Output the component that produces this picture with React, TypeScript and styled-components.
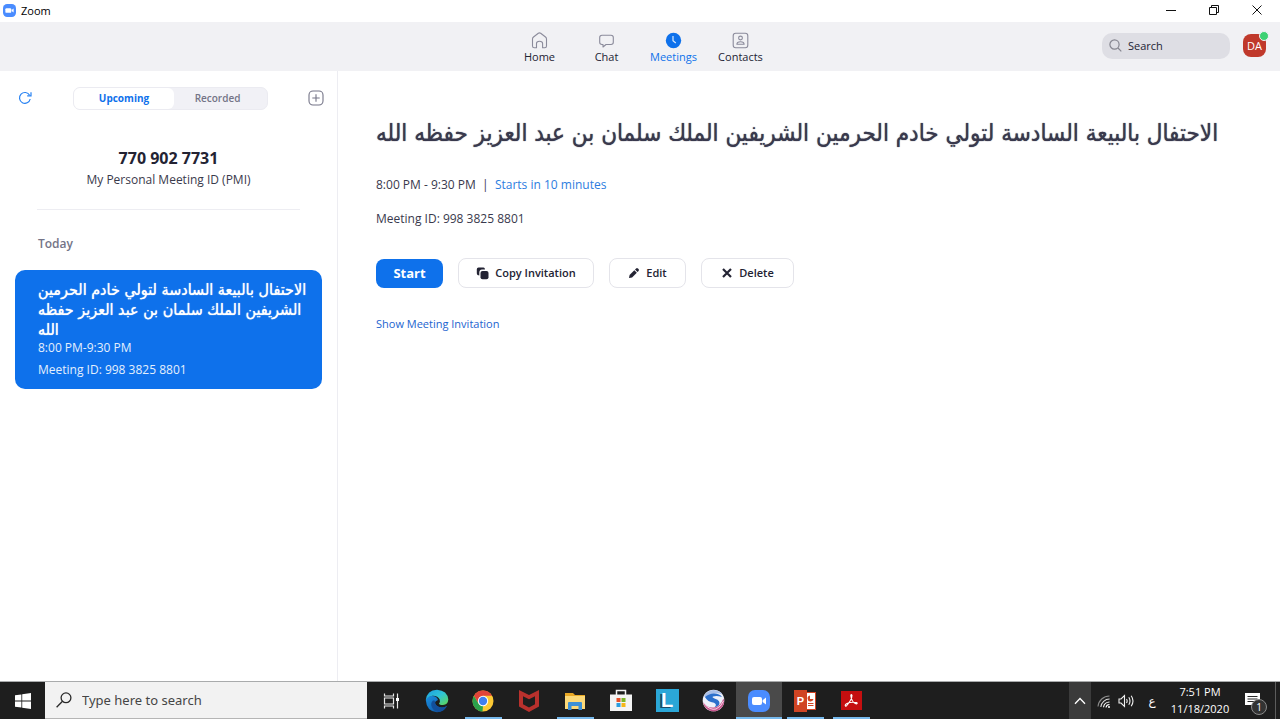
import React, { useState } from "react";
import styled, { createGlobalStyle } from "styled-components";

const GlobalStyle = createGlobalStyle`
  * { box-sizing: border-box; }
  body {
    margin: 0;
    background: #ffffff;
    color: #232333;
    font-family: "Open Sans", "DejaVu Sans", sans-serif;
    font-size: 12px;
    line-height: 16px;
  }
  button, input { font: inherit; color: inherit; }
  button { background: none; border: 0; padding: 0; margin: 0; cursor: pointer; }
  h1, h2, p, ul { margin: 0; padding: 0; font-weight: normal; }
  a { text-decoration: none; }
  svg { display: block; flex: none; }
`;

const Screen = styled.div`
  min-height: 100vh;
  display: flex;
  flex-direction: column;
`;

/* ---------- window title bar ---------- */

const TitleBar = styled.div`
  height: 22px;
  display: flex;
  align-items: flex-start;
  justify-content: space-between;
  padding: 0 2px 0 3px;
`;

const AppName = styled.span`
  display: flex;
  align-items: center;
  gap: 5px;
  font-size: 11px;
  line-height: 21px;
  color: #000;
`;

const WindowButtons = styled.div`
  display: flex;
`;

const WindowButton = styled.button`
  width: 43px;
  height: 20px;
  display: grid;
  place-items: center;
`;

/* ---------- header ---------- */

const Header = styled.header`
  height: 49px;
  background: #f1f1f4;
  display: grid;
  grid-template-columns: 1fr auto 1fr;
  align-items: center;
`;

const Nav = styled.nav`
  grid-column: 2;
  display: grid;
  grid-template-columns: repeat(4, 67px);
  padding-top: 4px;
`;

const NavItem = styled.button<{ $active?: boolean }>`
  display: flex;
  flex-direction: column;
  align-items: center;
  font-size: 11px;
  line-height: 16px;
  color: ${(p) => (p.$active ? "#0e71eb" : "#232333")};
`;

const HeaderRight = styled.div`
  justify-self: end;
  display: flex;
  align-items: center;
  gap: 13px;
  padding: 0 14px 2px 0;
`;

const SearchBox = styled.label`
  width: 128px;
  height: 26px;
  border-radius: 10px;
  background: #dedee4;
  display: flex;
  align-items: center;
  gap: 6px;
  padding: 0 7px;

  input {
    width: 80px;
    border: 0;
    padding: 0;
    background: none;
    outline: none;
    font-size: 11px;
  }
  input::placeholder { color: #232333; opacity: 1; }
`;

const Avatar = styled.button`
  position: relative;
  width: 23px;
  height: 23px;
  border-radius: 8px;
  background: #c0392b;
  color: #fff;
  font-size: 11px;
  line-height: 23px;
  text-align: center;
`;

const Presence = styled.span`
  position: absolute;
  top: -3px;
  right: -3px;
  width: 10px;
  height: 10px;
  border-radius: 50%;
  border: 1px solid #f1f1f4;
  background: #3dd173;
`;

/* ---------- body ---------- */

const Body = styled.div`
  flex: 1;
  display: flex;
`;

const Sidebar = styled.aside`
  width: 338px;
  flex: none;
  border-right: 1px solid #ededf2;
  padding: 15px 13px 0;
`;

const SidebarTop = styled.div`
  display: flex;
  align-items: center;
  justify-content: space-between;
  height: 24px;
  padding-left: 4px;
`;

const IconButton = styled.button`
  width: 16px;
  height: 16px;
  display: grid;
  place-items: center;
`;

const Segmented = styled.div`
  width: 195px;
  height: 23px;
  display: flex;
  border-radius: 7px;
  background: #f1f1f6;
  border: 1px solid #ebebf1;
`;

const Segment = styled.button<{ $active?: boolean }>`
  width: ${(p) => (p.$active ? "100px" : "87px")};
  height: 21px;
  border-radius: 6px;
  background: ${(p) => (p.$active ? "#fff" : "transparent")};
  color: ${(p) => (p.$active ? "#0e71eb" : "#747487")};
  font-size: 10px;
  font-weight: ${(p) => (p.$active ? 700 : 600)};
  line-height: 20px;
`;

const PersonalId = styled.section`
  margin: 37px 24px 0;
  padding-bottom: 19px;
  border-bottom: 1px solid #ededf2;
  text-align: center;

  h2 { font-size: 16px; line-height: 22px; font-weight: 700; }
  p { line-height: 21px; font-size: 12px; color: #3a3a4c; }
`;

const DayLabel = styled.h2`
  margin: 24px 25px 0;
  font-size: 12px;
  line-height: 20px;
  font-weight: 600;
  color: #747487;
`;

const MeetingCard = styled.button`
  display: block;
  width: 307px;
  margin: 16px 2px 0;
  padding: 10px 12px 11px 23px;
  border-radius: 10px;
  background: #0e71eb;
  color: #fff;
  text-align: left;
`;

const CardTitle = styled.span`
  display: block;
  font-family: "DejaVu Sans Condensed", "DejaVu Sans", sans-serif;
  font-size: 16px;
  line-height: 20px;
  text-align: left;
  text-shadow: 0 0 1px #fff;
`;

const CardLine = styled.span`
  display: block;
  font-size: 12px;
  line-height: 16px;
  color: #e3effd;

  & + & { margin-top: 6px; }
`;

const Detail = styled.main`
  flex: 1;
  padding: 44px 38px 0;
`;

const DetailTitle = styled.h1`
  font-family: "DejaVu Sans Condensed", "DejaVu Sans", sans-serif;
  font-size: 24px;
  line-height: 36px;
  color: #39394d;
  text-align: left;
  text-shadow: 0 0 1px #39394d;
`;

const DetailLine = styled.p`
  margin-top: 14px;
  line-height: 20px;
  color: #39394d;
  white-space: pre;

  &:first-of-type { margin-top: 24px; }
`;

const StartsIn = styled.span`
  color: #2d7de0;
`;

const Actions = styled.div`
  display: flex;
  align-items: center;
  gap: 15px;
  margin: 29px 0 28px;
`;

const Action = styled.button<{ $width: number }>`
  width: ${(p) => p.$width}px;
  height: 30px;
  border: 1px solid #e4e4ea;
  border-radius: 8px;
  display: flex;
  align-items: center;
  justify-content: center;
  gap: 6px;
  font-size: 11px;
  font-weight: 600;
`;

const StartButton = styled(Action)`
  border: 0;
  height: 29px;
  background: #0e71eb;
  color: #fff;
  font-size: 13px;
  font-weight: 700;
`;

const TextLink = styled.a`
  font-size: 11px;
  line-height: 16px;
  color: #1c64cf;
`;

/* ---------- taskbar ---------- */

const Taskbar = styled.footer`
  height: 38px;
  background: #1e1e1e;
  border-top: 1px solid #a9abac;
  display: flex;
  color: #fff;
`;

const StartMenu = styled.button`
  width: 45px;
  display: grid;
  place-items: center;
`;

const TaskSearch = styled.label`
  width: 322px;
  background: #f2f2f2;
  border-bottom: 1px solid #b5b5b5;
  color: #3c3c3c;
  display: flex;
  align-items: center;
  gap: 10px;
  padding-left: 11px;

  input {
    width: 240px;
    border: 0;
    padding: 0;
    outline: none;
    background: none;
    font-family: "Noto Sans", sans-serif;
    font-size: 13px;
    line-height: 20px;
  }
  input::placeholder { color: #454545; opacity: 1; }
`;

const TaskButton = styled.button<{ $state?: "running" | "active" }>`
  width: 46px;
  display: grid;
  place-items: center;
  position: relative;
  background: ${(p) => (p.$state === "active" ? "#4a4a4a" : "transparent")};

  &::after {
    content: "";
    position: absolute;
    left: ${(p) => (p.$state === "active" ? "0" : "5px")};
    right: ${(p) => (p.$state === "active" ? "0" : "4px")};
    bottom: 0;
    height: ${(p) => (p.$state ? "2px" : "0")};
    background: #76b9ed;
  }
`;

const TaskList = styled.div`
  display: flex;
  padding-left: 1px;
`;

const Tray = styled.div`
  margin-left: auto;
  display: flex;
  align-items: stretch;
`;

const TrayButton = styled.button<{ $width: number; $lit?: boolean }>`
  width: ${(p) => p.$width}px;
  display: grid;
  place-items: center;
  background: ${(p) => (p.$lit ? "#3b3b3b" : "transparent")};
  font-family: "DejaVu Sans", sans-serif;
  font-size: 12px;
`;

const Clock = styled.button`
  width: 62px;
  display: flex;
  flex-direction: column;
  align-items: center;
  justify-content: center;
  padding-bottom: 2px;
  font-size: 11px;
  line-height: 17px;
`;

const ShowDesktop = styled.button`
  width: 5px;
  border-left: 1px solid #5c5c5c;
`;

/* ---------- drawings ---------- */

const ZoomLogo = ({ size }: { size: number }) => (
  <svg width={size} height={size} viewBox="0 0 22 22">
    <rect width="22" height="22" rx="7" fill="#4a8cff" />
    <rect x="4" y="7" width="10" height="8" rx="2" fill="#fff" />
    <path d="M14.600 10.200 L18 7.600 V14.400 L14.600 11.900 Z" fill="#fff" />
  </svg>
);

const navStroke = { fill: "none", stroke: "#8b8b9b", strokeWidth: 1.1, strokeLinejoin: "round" as const };

const HomeIcon = () => (
  <svg width="17" height="17" viewBox="0 0 17 17" {...navStroke}>
    <path d="M1.500 7 Q1.500 5.800 2.500 5 L7.300 1.300 Q8.500 .5 9.700 1.300 L14.500 5 Q15.500 5.800 15.500 7 V14 Q15.500 15.800 13.800 15.800 H11.600 V11.500 Q11.600 9.300 8.500 9.300 Q5.500 9.300 5.500 11.500 V15.800 H3.300 Q1.500 15.800 1.500 14 Z" />
  </svg>
);

const ChatIcon = () => (
  <svg width="17" height="17" viewBox="0 0 17 17" {...navStroke}>
    <path d="M4 3.300 H13 Q15.300 3.300 15.300 5.500 V10.300 Q15.300 12.500 13 12.500 H8 L5 15 V12.500 H4 Q1.700 12.500 1.700 10.300 V5.500 Q1.700 3.300 4 3.300 Z" />
  </svg>
);

const MeetingsIcon = () => (
  <svg width="17" height="17" viewBox="0 0 17 17">
    <circle cx="8.500" cy="8.500" r="7.700" fill="#0e71eb" />
    <path d="M8 4 V8.700 L10.800 11" fill="none" stroke="#d8e9fd" strokeWidth="1.200" />
  </svg>
);

const ContactsIcon = () => (
  <svg width="17" height="17" viewBox="0 0 17 17" {...navStroke}>
    <rect x="1.200" y="1.200" width="14.600" height="14.600" rx="2.500" />
    <circle cx="8.500" cy="6" r="1.900" />
    <path d="M4.900 12.300 Q4.900 9.700 8.500 9.700 Q12.100 9.700 12.100 12.300 Z" />
  </svg>
);

const SearchIcon = () => (
  <svg width="13" height="13" viewBox="0 0 13 13" fill="none" stroke="#85858f" strokeWidth="1.200">
    <circle cx="5.500" cy="5.500" r="4.600" />
    <path d="M9 9 L12.300 12.300" />
  </svg>
);

const RefreshIcon = () => (
  <svg width="14" height="14" viewBox="0 0 14 14" fill="none" stroke="#2681f2" strokeWidth="1.200">
    <path d="M12.200 8 A5.400 5.400 0 1 1 11.600 4.200" />
    <path d="M13 1.200 V4.800 H9.200" />
  </svg>
);

const PlusIcon = () => (
  <svg width="16" height="16" viewBox="0 0 16 16" fill="none" stroke="#747487" strokeWidth="1.100">
    <rect x="1" y="1" width="14" height="14" rx="4" />
    <path d="M8 4.300 V11.700 M4.300 8 H11.700" />
  </svg>
);

const CopyIcon = () => (
  <svg width="13" height="13" viewBox="0 0 13 13" fill="#232333">
    <path d="M2.500 .5 H7.500 Q8.900 .5 9 2.600 H6 Q3.400 2.800 3.300 5.500 V8.500 Q.8 8.500 .8 6.500 V2.200 Q.8 .5 2.500 .5 Z" />
    <rect x="4.500" y="4" width="8" height="8.200" rx="2" />
  </svg>
);

const EditIcon = () => (
  <svg width="12" height="12" viewBox="0 0 12 12" fill="#232333">
    <path d="M1 11 L1.600 7.900 L6.300 3.200 L8.800 5.700 L4.100 10.400 Z" />
    <path d="M7 2.500 L8.100 1.400 Q9 .7 9.900 1.400 L10.600 2.100 Q11.300 3 10.600 3.900 L9.500 5 Z" />
  </svg>
);

const DeleteIcon = () => (
  <svg width="12" height="12" viewBox="0 0 12 12" fill="none" stroke="#232333" strokeWidth="2.200">
    <path d="M2 2 L10 10 M10 2 L2 10" />
  </svg>
);

const WindowsIcon = () => (
  <svg width="16" height="16" viewBox="0 0 16 16" fill="#fff">
    <path d="M0 2.300 L6.400 1.400 V7.500 H0 Z M7.200 1.300 L16 0 V7.500 H7.200 Z M0 8.400 H6.400 V14.600 L0 13.700 Z M7.200 8.400 H16 V16 L7.200 14.700 Z" />
  </svg>
);

const TaskSearchIcon = () => (
  <svg width="16" height="16" viewBox="0 0 16 16" fill="none" stroke="#2a2a2a" strokeWidth="1.300">
    <circle cx="10" cy="5.800" r="4.900" />
    <path d="M6.500 9.300 L.6 15.300" />
  </svg>
);

const TaskViewIcon = () => (
  <svg width="17" height="16" viewBox="0 0 17 16" fill="none" stroke="#e8e8e8" strokeWidth="1.200">
    <path d="M1.500 .5 V3 H10.500 V.5 M1.500 15.500 V13 H10.500 V15.500 M1.500 5 H10.500 V11 H1.500 Z M14.500 .5 V15.500" />
    <path d="M13 5 H16 V8 H13 Z" fill="#fff" stroke="none" />
  </svg>
);

const EdgeIcon = () => (
  <svg width="24" height="24" viewBox="0 0 24 24">
    <defs>
      <linearGradient id="edgeTop" x1="0" y1="0" x2="1" y2="1">
        <stop offset="0" stopColor="#1b9de2" />
        <stop offset=".5" stopColor="#2fc4d6" />
        <stop offset="1" stopColor="#62d84e" />
      </linearGradient>
      <linearGradient id="edgeBase" x1="0" y1="0" x2="1" y2="1">
        <stop offset="0" stopColor="#1a8fe0" />
        <stop offset="1" stopColor="#0d4f9e" />
      </linearGradient>
    </defs>
    <path d="M.8 11 Q1.500 7 7 7 Q12 7.200 13 11 Q10 12 10 14 Q11 18 16 18.500 Q19.500 18.700 22 17 Q18.500 23 12 23.300 Q1.500 22.500 .8 11 Z" fill="url(#edgeBase)" />
    <path d="M.8 11 Q2 1 12 .7 Q22.500 1.500 23.300 10.500 Q23 15.500 18 16 Q14.500 16 14 14.500 Q15.500 13 14.700 10.500 Q13 6.500 7.500 6.700 Q3 7 .8 11 Z" fill="url(#edgeTop)" />
    <path d="M8 11.500 Q5 14 7 18.500 Q9.500 23 14 23 Q19 22.300 22 17 Q18 19.200 14.500 18 Q9.500 16 10 12.500 Q10 11 8 11.500 Z" fill="#124f9b" />
  </svg>
);

const ChromeIcon = () => (
  <svg width="22" height="22" viewBox="0 0 22 22">
    <circle cx="11" cy="11" r="10.500" fill="#fcc934" />
    <path d="M1.900 5.750 A10.500 10.500 0 0 1 20.100 5.750 H11 L6.500 13.600 Z" fill="#e0443a" />
    <path d="M1.900 5.750 L6.450 13.600 L11 16.200 L10.500 21.500 A10.500 10.500 0 0 1 1.900 5.750 Z" fill="#2ba24c" />
    <circle cx="11" cy="11" r="5.200" fill="#fff" />
    <circle cx="11" cy="11" r="4.200" fill="#3f7ff0" />
  </svg>
);

const McAfeeIcon = () => (
  <svg width="22" height="24" viewBox="0 0 22 24">
    <path d="M1 1 L11 6 L21 1 V17.500 L11 23 L1 17.500 Z M5 7.200 V15.300 L11 18.500 L17 15.300 V7.200 L11 10.200 Z" fill="#b9312d" fillRule="evenodd" />
  </svg>
);

const ExplorerIcon = () => (
  <svg width="22" height="18" viewBox="0 0 22 18">
    <path d="M1 1 H9 L11 3 H21 V16 H1 Z" fill="#e9a825" />
    <rect x="1" y="4" width="20" height="13" fill="#fcd978" />
    <path d="M4 18 V11 Q4 10 5 10 H17 Q18 10 18 11 V18 H14.500 V14 H7.500 V18 Z" fill="#3b8fd6" />
  </svg>
);

const StoreIcon = () => (
  <svg width="22" height="23" viewBox="0 0 22 23">
    <path d="M6.500 6 V1.500 H15.500 V6" fill="none" stroke="#f4f4f4" strokeWidth="1.500" />
    <path d="M0 5.500 H22 V22 H0 Z" fill="#f4f4f4" />
    <rect x="6.500" y="9" width="4" height="4" fill="#e8502a" />
    <rect x="11.500" y="9" width="4" height="4" fill="#7cb628" />
    <rect x="6.500" y="14" width="4" height="4" fill="#2a9ee0" />
    <rect x="11.500" y="14" width="4" height="4" fill="#f6b718" />
  </svg>
);

const LetterTile = styled.span`
  width: 23px;
  height: 23px;
  background: #2ba7d8;
  font-family: "Liberation Sans", sans-serif;
  font-size: 20px;
  font-weight: 700;
  line-height: 23px;
  text-align: center;
  text-shadow: -2px 1px 0 #174a68;
`;

const SwirlIcon = () => (
  <svg width="23" height="23" viewBox="0 0 23 23">
    <circle cx="11.500" cy="11.500" r="10.800" fill="#eef1fa" />
    <path d="M2 7 Q5 1.500 11.500 1 Q18.500 1.500 20.500 5.500 Q14 2.800 9.500 6 Q6.500 9 11 11 Q6 12 2 7 Z" fill="#a9bfe8" />
    <path d="M3 8 Q7 4.500 12 4.500 Q18 4.800 20 8 Q15 6.500 11 7.500 Q9.500 8.500 13 9.700 Q19 11.500 17 16 Q15.500 18 12.500 18.200 Q15.500 15.500 12 13.700 Q5.500 13 3 8 Z" fill="#2c70cc" />
    <path d="M1 13 Q4.500 18.500 10.500 18.500 Q17.500 19.500 21.500 9.500 Q23.500 16 17.500 20.500 Q11 24.500 5 20 Q1.500 17 1 13 Z" fill="#c8558c" />
    <path d="M2.500 15 Q8 21.500 14 20 Q19 18 21.500 12" fill="none" stroke="#f6d6e6" strokeWidth="1" />
  </svg>
);

const OfficeGlyph = styled.span`
  display: flex;
  align-items: center;
  width: 22px;
  height: 22px;

  b {
    width: 13px;
    height: 22px;
    background: #d04423;
    font-family: "Liberation Sans", sans-serif;
    font-size: 11px;
    line-height: 22px;
    text-align: center;
  }
`;

const SlideIcon = () => (
  <svg width="9" height="18" viewBox="0 0 9 18">
    <rect width="9" height="18" fill="#d04423" />
    <rect y="1" width="8" height="16" fill="#fff" />
    <path d="M3 3.500 A3 3 0 1 0 6.500 7 H3 Z" fill="#d04423" />
    <path d="M1 11.500 H6.500 M1 13.500 H6.500" stroke="#d04423" />
  </svg>
);

const PdfIcon = () => (
  <svg width="21" height="19" viewBox="0 0 21 19">
    <rect width="21" height="19" fill="#c50f10" />
    <path d="M4.500 15 Q3.500 14 6 12.600 Q10 10.500 15.500 11.600 Q17 12.300 15.300 13 Q10.500 11.500 9.800 4.500 Q10 2.500 11 4.300 Q11 8.500 5.800 14.500 Q5 15.500 4.500 15 Z" fill="none" stroke="#fff" strokeWidth="1.100" />
  </svg>
);

const ChevronIcon = () => (
  <svg width="12" height="8" viewBox="0 0 12 8" fill="none" stroke="#fff" strokeWidth="1.300">
    <path d="M1 6.800 L6 1.500 L11 6.800" />
  </svg>
);

const WifiIcon = () => (
  <svg width="14" height="14" viewBox="0 0 14 14" fill="none" strokeWidth="1.100">
    <path d="M1 12.500 A11.500 11.500 0 0 1 12.500 2" stroke="#8c8c8c" />
    <path d="M3.800 13 A8.800 8.800 0 0 1 12.600 5" stroke="#dcdcdc" />
    <path d="M6.500 13.200 A6 6 0 0 1 12.500 8" stroke="#fff" />
    <path d="M9 13.500 A3.500 3.500 0 0 1 12.500 10.500" stroke="#fff" />
    <circle cx="12" cy="13" r="1" fill="#fff" />
  </svg>
);

const SpeakerIcon = () => (
  <svg width="17" height="14" viewBox="0 0 17 14" fill="none" stroke="#f0f0f0" strokeWidth="1.100">
    <path d="M1 5 H3 L6.500 1.500 V12.500 L3 9 H1 Z" />
    <path d="M8.500 5 Q9.800 7 8.500 9 M10.800 3.300 Q13.200 7 10.800 10.700 M13.200 1.800 Q16.800 7 13.200 12.200" />
  </svg>
);

const NoticeIcon = () => (
  <svg width="16" height="16" viewBox="0 0 16 16">
    <path d="M0 0 H15 V12 H10 L7 15 V12 H0 Z" fill="#fff" />
    <path d="M2.500 3.500 H12.500 M2.500 6 H12.500 M2.500 8.500 H12.500" stroke="#2a2a2a" />
  </svg>
);

const NoticeHolder = styled.span`
  position: relative;
`;

const NoticeCount = styled.span`
  position: absolute;
  left: 6px;
  top: 6px;
  width: 16px;
  height: 16px;
  border-radius: 50%;
  border: 1px solid #8a8a8a;
  background: #333;
  font-family: "Open Sans", sans-serif;
  font-size: 10px;
  line-height: 14px;
  text-align: center;
`;

const TITLE = "الاحتفال بالبيعة السادسة لتولي خادم الحرمين الشريفين الملك سلمان بن عبد العزيز حفظه الله";

const navItems = [
  { label: "Home", icon: <HomeIcon /> },
  { label: "Chat", icon: <ChatIcon /> },
  { label: "Meetings", icon: <MeetingsIcon /> },
  { label: "Contacts", icon: <ContactsIcon /> },
];

const tasks: { name: string; icon: React.ReactNode; state?: "running" | "active" }[] = [
  { name: "Task View", icon: <TaskViewIcon /> },
  { name: "Edge", icon: <EdgeIcon /> },
  { name: "Chrome", icon: <ChromeIcon />, state: "running" },
  { name: "McAfee", icon: <McAfeeIcon /> },
  { name: "File Explorer", icon: <ExplorerIcon />, state: "running" },
  { name: "Store", icon: <StoreIcon /> },
  { name: "Lessons", icon: <LetterTile>L</LetterTile> },
  { name: "Browser", icon: <SwirlIcon /> },
  { name: "Zoom", icon: <ZoomLogo size={22} />, state: "active" },
  { name: "PowerPoint", icon: <OfficeGlyph><b>P</b><SlideIcon /></OfficeGlyph>, state: "running" },
  { name: "Acrobat", icon: <PdfIcon />, state: "running" },
];

export default function App() {
  const [query, setQuery] = useState("");
  const [taskQuery, setTaskQuery] = useState("");

  return (
    <Screen>
      <GlobalStyle />
      <TitleBar>
        <AppName><ZoomLogo size={13} />Zoom</AppName>
        <WindowButtons>
          <WindowButton aria-label="Minimize">
            <svg width="10" height="10" viewBox="0 0 10 10" stroke="#111"><path d="M0 5.500 H10" /></svg>
          </WindowButton>
          <WindowButton aria-label="Restore">
            <svg width="10" height="10" viewBox="0 0 10 10" fill="none" stroke="#111">
              <path d="M.5 2.500 H7.500 V9.500 H.5 Z M2.500 2.500 V.5 H9.500 V7.500 H7.500" />
            </svg>
          </WindowButton>
          <WindowButton aria-label="Close">
            <svg width="10" height="10" viewBox="0 0 10 10" stroke="#111"><path d="M.5 .5 L9.500 9.500 M9.500 .5 L.5 9.500" /></svg>
          </WindowButton>
        </WindowButtons>
      </TitleBar>

      <Header>
        <Nav>
          {navItems.map((item) => (
            <NavItem key={item.label} $active={item.label === "Meetings"}>
              {item.icon}
              {item.label}
            </NavItem>
          ))}
        </Nav>
        <HeaderRight>
          <SearchBox>
            <SearchIcon />
            <input aria-label="Search" placeholder="Search" value={query} onChange={(e) => setQuery(e.target.value)} />
          </SearchBox>
          <Avatar>DA<Presence /></Avatar>
        </HeaderRight>
      </Header>

      <Body>
        <Sidebar>
          <SidebarTop>
            <IconButton aria-label="Refresh"><RefreshIcon /></IconButton>
            <Segmented>
              <Segment $active>Upcoming</Segment>
              <Segment>Recorded</Segment>
            </Segmented>
            <IconButton aria-label="Add"><PlusIcon /></IconButton>
          </SidebarTop>
          <PersonalId>
            <h2>770 902 7731</h2>
            <p>My Personal Meeting ID (PMI)</p>
          </PersonalId>
          <DayLabel>Today</DayLabel>
          <MeetingCard>
            <CardTitle dir="rtl">{TITLE}</CardTitle>
            <CardLine>8:00 PM-9:30 PM</CardLine>
            <CardLine>Meeting ID: 998 3825 8801</CardLine>
          </MeetingCard>
        </Sidebar>

        <Detail>
          <DetailTitle dir="rtl">{TITLE}</DetailTitle>
          <DetailLine>8:00 PM - 9:30 PM{"  |  "}<StartsIn>Starts in 10 minutes</StartsIn></DetailLine>
          <DetailLine>Meeting ID: 998 3825 8801</DetailLine>
          <Actions>
            <StartButton $width={67}>Start</StartButton>
            <Action $width={136}><CopyIcon />Copy Invitation</Action>
            <Action $width={77}><EditIcon />Edit</Action>
            <Action $width={93}><DeleteIcon />Delete</Action>
          </Actions>
          <TextLink href="#invitation">Show Meeting Invitation</TextLink>
        </Detail>
      </Body>

      <Taskbar>
        <StartMenu aria-label="Start menu"><WindowsIcon /></StartMenu>
        <TaskSearch>
          <TaskSearchIcon />
          <input aria-label="Type here to search" placeholder="Type here to search" value={taskQuery} onChange={(e) => setTaskQuery(e.target.value)} />
        </TaskSearch>
        <TaskList>
          {tasks.map((task) => (
            <TaskButton key={task.name} aria-label={task.name} $state={task.state}>{task.icon}</TaskButton>
          ))}
        </TaskList>
        <Tray>
          <TrayButton $width={22} $lit aria-label="Hidden icons"><ChevronIcon /></TrayButton>
          <TrayButton $width={26} aria-label="Network"><WifiIcon /></TrayButton>
          <TrayButton $width={18} aria-label="Volume"><SpeakerIcon /></TrayButton>
          <TrayButton $width={34}>ع</TrayButton>
          <Clock><span>7:51 PM</span><span>11/18/2020</span></Clock>
          <TrayButton $width={44} aria-label="Notifications">
            <NoticeHolder><NoticeIcon /><NoticeCount>1</NoticeCount></NoticeHolder>
          </TrayButton>
          <ShowDesktop aria-label="Show desktop" />
        </Tray>
      </Taskbar>
    </Screen>
  );
}
